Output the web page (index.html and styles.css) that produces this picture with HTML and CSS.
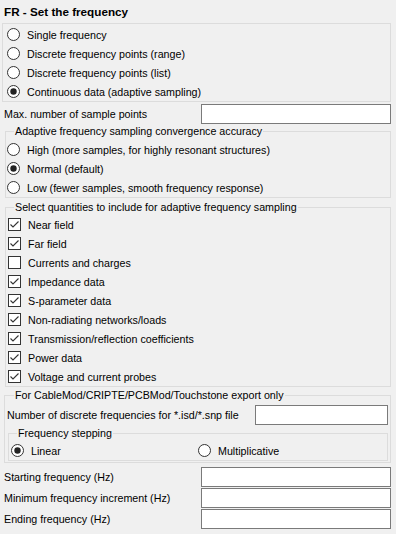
FILE: index.html
```html
<!DOCTYPE html>
<html lang="en">

<head>
  <meta charset="UTF-8" />
  <meta name="viewport" content="width=device-width, initial-scale=1.0" />
  <title>FR - Set the frequency</title>
  <link rel="stylesheet" href="styles.css">
</head>

<body>
  <svg class="defs" width="0" height="0">
    <symbol id="radio-off" viewBox="0 0 13 13">
      <circle cx="6.5" cy="6.5" r="6" fill="#fff" stroke="#333" />
    </symbol>
    <symbol id="radio-on" viewBox="0 0 13 13">
      <circle cx="6.5" cy="6.5" r="6" fill="#fff" stroke="#333" />
      <circle cx="6.5" cy="6.5" r="3.2" fill="#222" />
    </symbol>
    <symbol id="check-off" viewBox="0 0 13 13">
      <rect x="0.5" y="0.5" width="12" height="12" fill="#fff" stroke="#333" />
    </symbol>
    <symbol id="check-on" viewBox="0 0 13 13">
      <rect x="0.5" y="0.5" width="12" height="12" fill="#fff" stroke="#333" />
      <polyline points="2.5,6.5 5,9 10.5,3.5" fill="none" stroke="#333" stroke-width="1.1" />
    </symbol>
  </svg>

  <div class="panel">
    <div class="title">FR - Set the frequency</div>

    <fieldset class="group first">
      <label class="row"><svg class="ic"><use href="#radio-off" /></svg>Single frequency</label>
      <label class="row"><svg class="ic"><use href="#radio-off" /></svg>Discrete frequency points (range)</label>
      <label class="row"><svg class="ic"><use href="#radio-off" /></svg>Discrete frequency points (list)</label>
      <label class="row"><svg class="ic"><use href="#radio-on" /></svg>Continuous data (adaptive sampling)</label>
    </fieldset>

    <div class="field max">
      <span>Max. number of sample points</span>
      <input class="box" type="text">
    </div>

    <fieldset class="group accuracy">
      <legend>Adaptive frequency sampling convergence accuracy</legend>
      <label class="row"><svg class="ic"><use href="#radio-off" /></svg>High (more samples, for highly resonant structures)</label>
      <label class="row"><svg class="ic"><use href="#radio-on" /></svg>Normal (default)</label>
      <label class="row"><svg class="ic"><use href="#radio-off" /></svg>Low (fewer samples, smooth frequency response)</label>
    </fieldset>

    <fieldset class="group quantities">
      <legend>Select quantities to include for adaptive frequency sampling</legend>
      <label class="row"><svg class="ic"><use href="#check-on" /></svg>Near field</label>
      <label class="row"><svg class="ic"><use href="#check-on" /></svg>Far field</label>
      <label class="row"><svg class="ic"><use href="#check-off" /></svg>Currents and charges</label>
      <label class="row"><svg class="ic"><use href="#check-on" /></svg>Impedance data</label>
      <label class="row"><svg class="ic"><use href="#check-on" /></svg>S-parameter data</label>
      <label class="row"><svg class="ic"><use href="#check-on" /></svg>Non-radiating networks/loads</label>
      <label class="row"><svg class="ic"><use href="#check-on" /></svg>Transmission/reflection coefficients</label>
      <label class="row"><svg class="ic"><use href="#check-on" /></svg>Power data</label>
      <label class="row"><svg class="ic"><use href="#check-on" /></svg>Voltage and current probes</label>
    </fieldset>

    <fieldset class="group export">
      <legend>For CableMod/CRIPTE/PCBMod/Touchstone export only</legend>
      <div class="field discrete">
        <span>Number of discrete frequencies for *.isd/*.snp file</span>
        <input class="box" type="text">
      </div>
      <fieldset class="group stepping">
        <legend>Frequency stepping</legend>
        <div class="pair">
          <label class="row"><svg class="ic"><use href="#radio-on" /></svg>Linear</label>
          <label class="row"><svg class="ic"><use href="#radio-off" /></svg>Multiplicative</label>
        </div>
      </fieldset>
    </fieldset>

    <div class="range">
      <div class="field">
        <span>Starting frequency (Hz)</span>
        <input class="box" type="text">
      </div>
      <div class="field">
        <span>Minimum frequency increment (Hz)</span>
        <input class="box" type="text">
      </div>
      <div class="field">
        <span>Ending frequency (Hz)</span>
        <input class="box" type="text">
      </div>
    </div>
  </div>
</body>

</html>
```

FILE: styles.css
```css
* {
  padding: 0;
  margin: 0;
  box-sizing: border-box;
}

body {
  background: #f0f0f0;
  color: #000;
  font: 10.7px "Liberation Sans", Arial, sans-serif;
}

.defs {
  position: absolute;
}

.panel {
  width: 391px;
  height: 534px;
}

.title {
  height: 23px;
  line-height: 23px;
  padding-left: 4px;
  font-size: 11.7px;
  font-weight: bold;
}

.group {
  border: 1px solid #dcdcdc;
  min-width: 0;
}

.group legend {
  height: 13px;
  line-height: 13px;
  margin-left: 7px;
  padding: 0 1px;
}

.row {
  display: flex;
  align-items: center;
  gap: 7px;
  height: 19px;
  white-space: nowrap;
}

.ic {
  width: 13px;
  height: 13px;
  flex: none;
}

.first {
  margin-left: 2px;
  padding: 1px 4px 0;
}

.field {
  display: flex;
  align-items: center;
  justify-content: space-between;
  height: 20px;
  padding-left: 4px;
}

.box {
  width: 190px;
  height: 20px;
  border: 1px solid #7a7a7a;
  background: #fff;
  font: inherit;
}

.max {
  margin-top: 2px;
}

.accuracy {
  margin: 1px 0 0 5px;
  padding: 2px 1px 0;
}

.quantities {
  margin: 3px 0 0 5px;
  padding: 1px 2px 0;
}

.quantities legend {
  margin-left: 6px;
}

.export {
  margin: 2px 0 0 4px;
  padding: 3px 2px 1px 2px;
}

.discrete {
  padding-left: 0;
}

.discrete .box {
  width: 133px;
}

.stepping {
  margin: 2px 0 0 1px;
  padding: 1px 2px 0;
}

.stepping legend {
  margin-left: 6px;
}

.pair {
  display: grid;
  grid-template-columns: 1fr 1fr;
}

.range {
  display: flex;
  flex-direction: column;
  gap: 1px;
  margin-top: 4px;
}
```
